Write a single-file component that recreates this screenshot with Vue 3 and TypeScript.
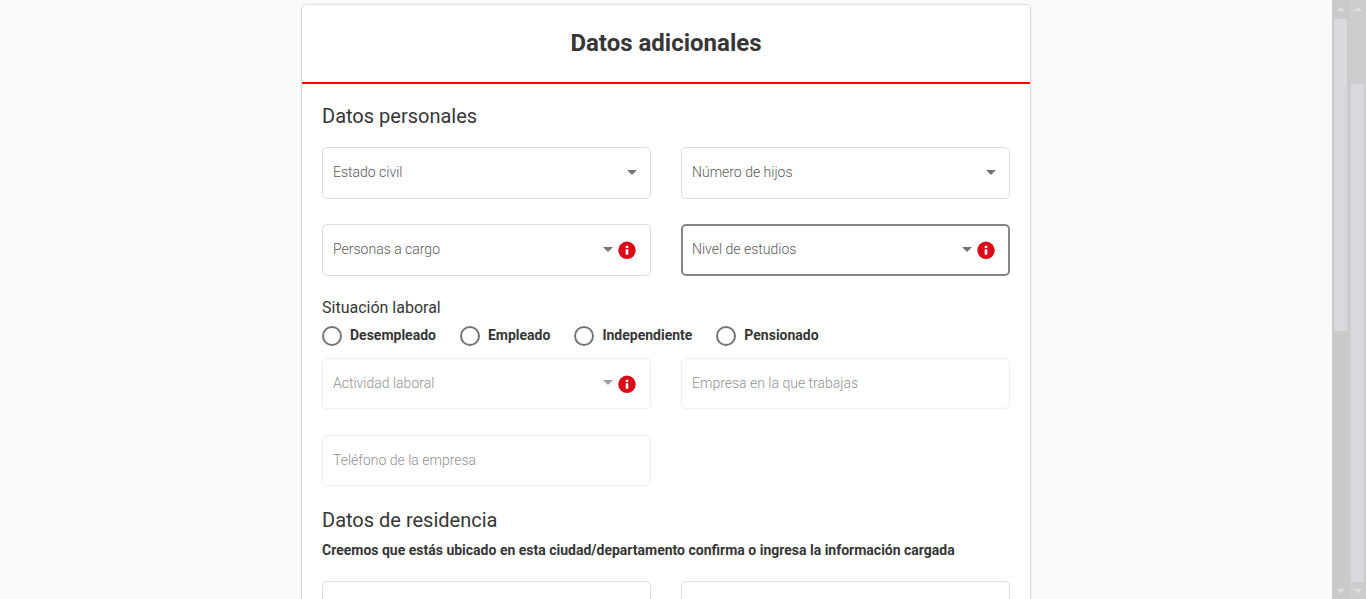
<script setup lang="ts">
import { ref } from 'vue'

interface Field {
  id: string
  label: string
  kind: 'select' | 'text'
  info?: boolean
  active?: boolean
}

const personalFields: Field[] = [
  { id: 'estado-civil', label: 'Estado civil', kind: 'select' },
  { id: 'hijos', label: 'Número de hijos', kind: 'select' },
  { id: 'personas', label: 'Personas a cargo', kind: 'select', info: true },
  { id: 'estudios', label: 'Nivel de estudios', kind: 'select', info: true, active: true },
]

const workFields: Field[] = [
  { id: 'actividad', label: 'Actividad laboral', kind: 'select', info: true },
  { id: 'empresa', label: 'Empresa en la que trabajas', kind: 'text' },
  { id: 'telefono', label: 'Teléfono de la empresa', kind: 'text' },
]

const situations: string[] = ['Desempleado', 'Empleado', 'Independiente', 'Pensionado']
const situation = ref<string>('')
</script>

<template>
  <div class="screen">
    <main class="content">
      <form class="card" @submit.prevent>
        <header class="card-header">
          <h1>Datos adicionales</h1>
        </header>
        <div class="card-body">
          <h2>Datos personales</h2>
          <div class="fields">
            <div v-for="f in personalFields" :key="f.id" class="field" :class="{ active: f.active }">
              <label :for="f.id">{{ f.label }}</label>
              <select :id="f.id"><option value=""></option></select>
              <span class="suffix" :class="{ 'with-info': f.info }">
                <svg class="arrow" viewBox="0 0 10 5" aria-hidden="true"><path d="M0 0h10L5 5z" /></svg>
                <svg v-if="f.info" class="info" viewBox="0 0 18 18" aria-hidden="true">
                  <circle cx="9" cy="9.3" r="8.7" />
                  <path d="M7.7 4.7h2.6v2.2H7.7zM7.7 8.2h2.6v5.6H7.7z" />
                </svg>
              </span>
            </div>
          </div>

          <fieldset class="situation">
            <legend>Situación laboral</legend>
            <div class="radios">
              <label v-for="s in situations" :key="s" class="radio">
                <input v-model="situation" type="radio" name="situacion" :value="s" />
                <span>{{ s }}</span>
              </label>
            </div>
          </fieldset>

          <div class="fields disabled">
            <div v-for="f in workFields" :key="f.id" class="field">
              <label :for="f.id">{{ f.label }}</label>
              <select v-if="f.kind === 'select'" :id="f.id" disabled><option value=""></option></select>
              <input v-else :id="f.id" type="text" disabled />
              <span v-if="f.kind === 'select'" class="suffix with-info">
                <svg class="arrow" viewBox="0 0 10 5" aria-hidden="true"><path d="M0 0h10L5 5z" /></svg>
                <svg class="info" viewBox="0 0 18 18" aria-hidden="true">
                  <circle cx="9" cy="9.3" r="8.7" />
                  <path d="M7.7 4.7h2.6v2.2H7.7zM7.7 8.2h2.6v5.6H7.7z" />
                </svg>
              </span>
            </div>
          </div>

          <h2 class="residence">Datos de residencia</h2>
          <p class="hint">Creemos que estás ubicado en esta ciudad/departamento confirma o ingresa la información cargada</p>
          <div class="fields">
            <div class="field"><input type="text" aria-label="Departamento" /></div>
            <div class="field"><input type="text" aria-label="Ciudad" /></div>
          </div>
        </div>
      </form>
    </main>
    <div class="scrollbar inner" aria-hidden="true">
      <svg viewBox="0 0 8 4"><path d="M4 0l4 4H0z" /></svg>
      <div class="track"><div class="thumb"></div></div>
      <svg viewBox="0 0 8 4"><path d="M0 0h8L4 4z" /></svg>
    </div>
    <div class="scrollbar outer" aria-hidden="true">
      <svg viewBox="0 0 8 4"><path d="M4 0l4 4H0z" /></svg>
      <div class="track"><div class="thumb"></div></div>
      <svg viewBox="0 0 8 4"><path d="M0 0h8L4 4z" /></svg>
    </div>
  </div>
</template>

<style>
body {
  margin: 0;
  background: #fafafa;
}
</style>

<style scoped>
.screen {
  display: flex;
  height: 100vh;
  overflow: hidden;
  font-family: Roboto, "Liberation Sans", sans-serif;
  font-size: 14px;
  color: #363636;
}
.content {
  flex: 1;
  min-width: 0;
  padding: 5px 16px 0;
  overflow: hidden;
}
.card {
  max-width: 728px;
  margin: 0 auto;
  background: #fff;
  border-radius: 4px;
  box-shadow: 0 0 0 1px rgba(0, 0, 0, 0.1), 0 1px 3px rgba(0, 0, 0, 0.12);
}
.card-header {
  padding: 22px 20px 23px;
  border-bottom: 2px solid #f00;
}
h1 {
  margin: 0;
  font-size: 24px;
  line-height: 32px;
  font-weight: 700;
  text-align: center;
}
.card-body {
  padding: 20px;
}
h2 {
  margin: 0 0 19px;
  font-size: 20px;
  line-height: 24px;
  font-weight: 400;
}
.fields {
  display: grid;
  grid-template-columns: 1fr 1fr;
  gap: 25px 30px;
}
.field {
  display: grid;
  grid-template: 50px / 1fr;
  align-items: center;
  border: 1px solid #dedede;
  border-radius: 5px;
}
.field > * {
  grid-area: 1 / 1;
}
.field.active {
  border: 2px solid #858585;
  grid-template-rows: 48px;
}
.field label {
  padding: 0 10px 2px;
  line-height: 20px;
  font-weight: 300;
  color: #5a5a5a;
  pointer-events: none;
  z-index: 1;
}
.field.active label {
  padding-left: 9px;
}
.field select,
.field input {
  appearance: none;
  box-sizing: border-box;
  width: 100%;
  height: 100%;
  margin: 0;
  padding: 0 10px;
  border: 0;
  outline: 0;
  border-radius: 4px;
  background: transparent;
  font: inherit;
  color: inherit;
}
.suffix {
  display: flex;
  align-items: center;
  justify-self: end;
  gap: 5px;
  padding-right: 13px;
  pointer-events: none;
}
.with-info {
  padding-right: 14px;
}
.field.active .suffix {
  padding-right: 13px;
}
.arrow {
  width: 10px;
  height: 5px;
  margin-bottom: 2px;
  fill: #757575;
}
.info {
  width: 18px;
  height: 18px;
}
.info circle {
  fill: #db0a16;
}
.info path {
  fill: #fff;
}
.situation {
  margin: 22px 0 12px;
  padding: 0;
  border: 0;
}
legend {
  padding: 0;
  font-size: 16px;
  line-height: 20px;
}
.radios {
  display: flex;
  flex-wrap: wrap;
  gap: 24px;
  padding-top: 8px;
}
.radio {
  display: flex;
  align-items: center;
  gap: 8px;
  font-weight: 700;
}
.radio span {
  line-height: 18px;
  padding-bottom: 2px;
}
.radio input {
  appearance: none;
  box-sizing: border-box;
  width: 20px;
  height: 20px;
  margin: 0;
  border: 2px solid #757575;
  border-radius: 50%;
}
.radio input:checked {
  background: #db0a16;
  box-shadow: inset 0 0 0 3px #fff;
}
.disabled {
  row-gap: 26px;
}
.disabled .field {
  grid-template-rows: 49px;
  border-color: #eee;
}
.disabled label {
  color: #929292;
}
.disabled .arrow {
  fill: #9e9e9e;
}
.residence {
  margin: 22px 0 8px;
}
.hint {
  margin: 0 0 21px;
  line-height: 20px;
  font-weight: 700;
}
.scrollbar {
  display: flex;
  flex-direction: column;
  align-items: center;
  flex: 0 0 17px;
  box-sizing: border-box;
  padding: 7px 0 6px;
  background: #cacaca;
}
.scrollbar svg {
  flex: none;
  width: 8px;
  height: 4px;
  fill: #e0e0e2;
}
.track {
  display: flex;
  flex-direction: column;
  flex: 1;
  width: 13px;
  margin: 8px 0 7px;
}
.thumb {
  background: #dadadc;
}
.inner .thumb {
  flex: 0 0 55.4%;
}
.outer {
  background: #cdcdcd;
}
.outer .track {
  justify-content: flex-end;
}
.outer .thumb {
  flex: 0 0 88.5%;
}
</style>
